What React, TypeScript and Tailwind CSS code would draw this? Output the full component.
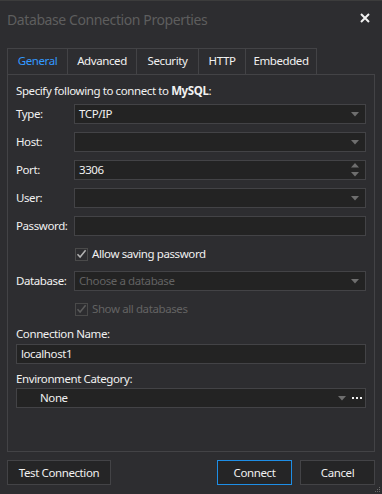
import React from "react";

const tabs = ["General", "Advanced", "Security", "HTTP", "Embedded"];
const tabWidths = ["w-[61px]", "w-[69px]", "w-[62px]", "w-[47px]", "w-[71px]"];

const Arrow = () => (
  <svg width="8" height="5" viewBox="0 0 8 5" className="shrink-0">
    <path d="M0 0h8L4 4.5z" fill="#6e6e6e" />
  </svg>
);

const Field = ({
  value,
  placeholder,
  arrow,
  spin,
}: {
  value?: string;
  placeholder?: string;
  arrow?: boolean;
  spin?: boolean;
}) => (
  <div className="flex h-[20px] flex-1 items-center border border-[#434346] bg-[#232323] pl-[4px] pr-[6px]">
    <span className={value ? "flex-1 text-[#f1f1f1]" : "flex-1 text-[#626262]"}>
      {value ?? placeholder ?? ""}
    </span>
    {arrow && <Arrow />}
    {spin && (
      <div className="flex flex-col gap-[4px]">
        <svg width="8" height="5" viewBox="0 0 8 5">
          <path d="M0 4.5h8L4 0z" fill="#6e6e6e" />
        </svg>
        <svg width="8" height="5" viewBox="0 0 8 5">
          <path d="M0 0h8L4 4.5z" fill="#6e6e6e" />
        </svg>
      </div>
    )}
  </div>
);

const Row = ({ label, children }: { label: string; children: React.ReactNode }) => (
  <div className="flex h-[20px] items-center">
    <span className="w-[58px] shrink-0 text-[#f1f1f1]">{label}</span>
    {children}
  </div>
);

const Check = ({ label, dim }: { label: string; dim?: boolean }) => (
  <div className="flex h-[14px] items-center pl-[58px]">
    <div className="ml-[1px] flex h-[13px] w-[13px] items-center justify-center border border-[#4a4a4a] bg-[#2d2d30]">
      <svg width="11" height="10" viewBox="0 0 11 10">
        <path d="M1.5 5.2l2.6 2.8L9.6 1.2" fill="none" stroke={dim ? "#5c5c5c" : "#b4b4b4"} strokeWidth="1.5" />
      </svg>
    </div>
    <span className={dim ? "ml-[4px] text-[#636363]" : "ml-[4px] text-[#f1f1f1]"}>{label}</span>
  </div>
);

const Button = ({ label, active, w }: { label: string; active?: boolean; w: string }) => (
  <div
    className={`flex h-[25px] ${w} items-center justify-center border ${
      active ? "border-[#1e8ee6]" : "border-[#434346]"
    } bg-[#252526] text-[#f1f1f1]`}
  >
    {label}
  </div>
);

export default function App() {
  return (
    <div
      className="relative flex h-[494px] w-[382px] flex-col border-t border-[#3c3c3c] bg-[#2d2d30] text-[11.5px] leading-[14px] tracking-[-0.4px]"
      style={{ fontFamily: '"Noto Sans", "Open Sans", sans-serif' }}
    >
      <div className="flex h-[47px] items-start justify-between pl-[7px] pr-[12px] pt-[9px]">
        <span className="text-[14px] leading-[20px] tracking-[-0.4px] text-[#5e5e5e]">Database Connection Properties</span>
        <svg width="10" height="10" viewBox="0 0 10 10" className="mt-[3px]">
          <path d="M1 1l8 8M9 1l-8 8" stroke="#f1f1f1" strokeWidth="2" />
        </svg>
      </div>

      <div className="flex pl-[7px]">
        {tabs.map((t, i) => (
          <div
            key={t}
            className={`flex h-[26px] ${tabWidths[i]} items-center justify-center border-t border-r border-[#434346] ${
              i === 0 ? "border-l bg-[#2d2d30] text-[#3399ff] relative z-10 h-[26px] -mb-[1px] pb-[2px]" : "text-[#f1f1f1] pb-[1px]"
            }`}
          >
            {t}
          </div>
        ))}
      </div>

      <div className="mx-[7px] flex h-[378px] flex-col border border-[#434346] px-[8px] pt-[8px]">
        <div className="flex h-[16px] items-center text-[#f1f1f1]">
          Specify following to connect to&nbsp;<b>MySQL</b>:
        </div>
        <div className="mt-[5px] flex flex-col gap-[8px]">
          <Row label="Type:">
            <Field value="TCP/IP" arrow />
          </Row>
          <Row label="Host:">
            <Field arrow />
          </Row>
          <Row label="Port:">
            <Field value="3306" spin />
          </Row>
          <Row label="User:">
            <Field arrow />
          </Row>
          <Row label="Password:">
            <Field />
          </Row>
        </div>
        <div className="mt-[11px]">
          <Check label="Allow saving password" />
        </div>
        <div className="mt-[10px]">
          <Row label="Database:">
            <Field placeholder="Choose a database" arrow />
          </Row>
        </div>
        <div className="mt-[11px]">
          <Check label="Show all databases" dim />
        </div>
        <div className="mt-[11px] flex h-[14px] items-center text-[#f1f1f1]">Connection Name:</div>
        <div className="mt-[3px] flex">
          <Field value="localhost1" />
        </div>
        <div className="mt-[8px] flex h-[14px] items-center text-[#f1f1f1]">Environment Category:</div>
        <div className="mt-[2px] flex h-[20px] items-center border border-[#434346] bg-[#232323] pl-[23px] pr-[3px]">
          <span className="flex-1 text-[#f1f1f1]">None</span>
          <Arrow />
          <span className="ml-[6px] flex gap-[2px]">
            <span className="h-[2px] w-[2px] bg-[#f1f1f1]" />
            <span className="h-[2px] w-[2px] bg-[#f1f1f1]" />
            <span className="h-[2px] w-[2px] bg-[#f1f1f1]" />
          </span>
        </div>
      </div>

      <div className="mt-[8px] flex px-[7px]">
        <Button label="Test Connection" w="w-[104px]" />
        <div className="flex-1" />
        <Button label="Connect" active w="w-[75px]" />
        <div className="w-[8px]" />
        <Button label="Cancel" w="w-[75px]" />
      </div>

      <svg width="6" height="6" viewBox="0 0 6 6" className="absolute bottom-[1px] right-[1px]">
        <rect x="4" y="0" width="1" height="1" fill="#6a6a6a" />
        <rect x="2" y="2" width="1" height="1" fill="#6a6a6a" />
        <rect x="4" y="2" width="1" height="1" fill="#6a6a6a" />
        <rect x="0" y="4" width="1" height="1" fill="#6a6a6a" />
        <rect x="2" y="4" width="1" height="1" fill="#6a6a6a" />
        <rect x="4" y="4" width="1" height="1" fill="#6a6a6a" />
      </svg>
    </div>
  );
}
